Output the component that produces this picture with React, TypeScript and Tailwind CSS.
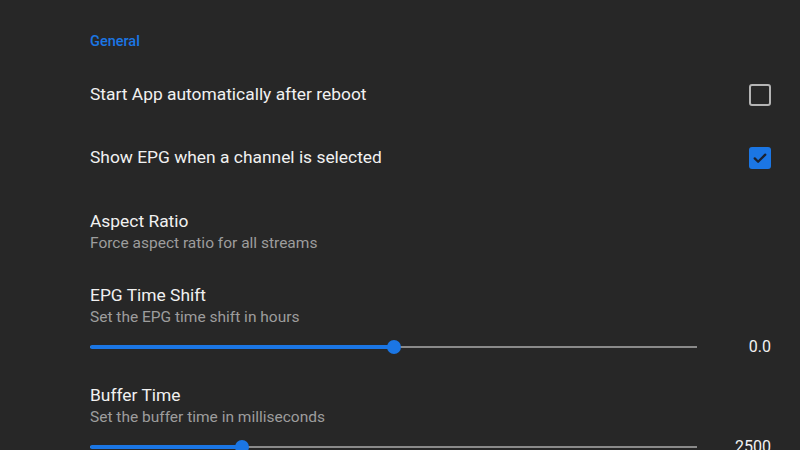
import React from 'react';

type SliderPref = {
    title: string;
    summary: string;
    fraction: number;
    value: string;
};

const sliders: SliderPref[] = [
    { title: 'EPG Time Shift', summary: 'Set the EPG time shift in hours', fraction: 0.5, value: '0.0' },
    { title: 'Buffer Time', summary: 'Set the buffer time in milliseconds', fraction: 0.25, value: '2500' },
];

const Checkbox: React.FC<{ checked: boolean }> = ({ checked }) =>
    checked ? (
        <div className="w-[22px] h-[22px] rounded-[3px] bg-[#1b76e4] flex items-center justify-center">
            <svg width="18" height="18" viewBox="0 0 24 24" fill="none">
                <path d="M5 12.5l4.5 4.5L19 7.5" stroke="#1b2230" strokeWidth="3" strokeLinecap="round" strokeLinejoin="round" />
            </svg>
        </div>
    ) : (
        <div className="w-[22px] h-[22px] rounded-[3px] border-2 border-[#b4b4b4]" />
    );

const Slider: React.FC<{ fraction: number }> = ({ fraction }) => (
    <div className="relative flex-1 h-[20px]">
        <div className="absolute left-0 right-0 top-[9px] h-[2px] bg-[#8a8a8a]" />
        <div
            className="absolute left-0 top-[8px] h-[4px] rounded-full bg-[#1b76e4]"
            style={{ width: `${fraction * 100}%` }}
        />
        <div
            className="absolute top-[3px] w-[14px] h-[14px] -ml-[7px] rounded-full bg-[#1b76e4]"
            style={{ left: `${fraction * 100}%` }}
        />
    </div>
);

const App: React.FC = () => {
    return (
        <div className="w-[800px] h-[450px] overflow-hidden bg-[#272727] pl-[90px] pr-[29px] pt-[31px] font-['Roboto',sans-serif]">
            <div className="h-[32px] text-[14.5px] leading-[22px] font-medium text-[#1b76e4]">General</div>

            {[
                { label: 'Start App automatically after reboot', checked: false },
                { label: 'Show EPG when a channel is selected', checked: true },
            ].map((row) => (
                <div key={row.label} className="h-[63px] flex items-center justify-between">
                    <span className="text-[17.4px] text-[#f1f1f1]">{row.label}</span>
                    <Checkbox checked={row.checked} />
                </div>
            ))}

            <div className="pt-[20px] pb-[30px]">
                <div className="text-[17.4px] leading-[24px] text-[#f1f1f1]">Aspect Ratio</div>
                <div className="text-[15.5px] leading-[20px] text-[#9d9d9d]">Force aspect ratio for all streams</div>
            </div>

            {sliders.map((s) => (
                <div key={s.title} className="pb-[26px]">
                    <div className="text-[17.4px] leading-[24px] text-[#f1f1f1]">{s.title}</div>
                    <div className="text-[15.5px] leading-[20px] text-[#9d9d9d]">{s.summary}</div>
                    <div className="mt-[10px] h-[20px] flex items-center">
                        <Slider fraction={s.fraction} />
                        <span className="w-[74px] text-right text-[16px] leading-[20px] text-[#f1f1f1]">{s.value}</span>
                    </div>
                </div>
            ))}
        </div>
    );
};

export default App;
